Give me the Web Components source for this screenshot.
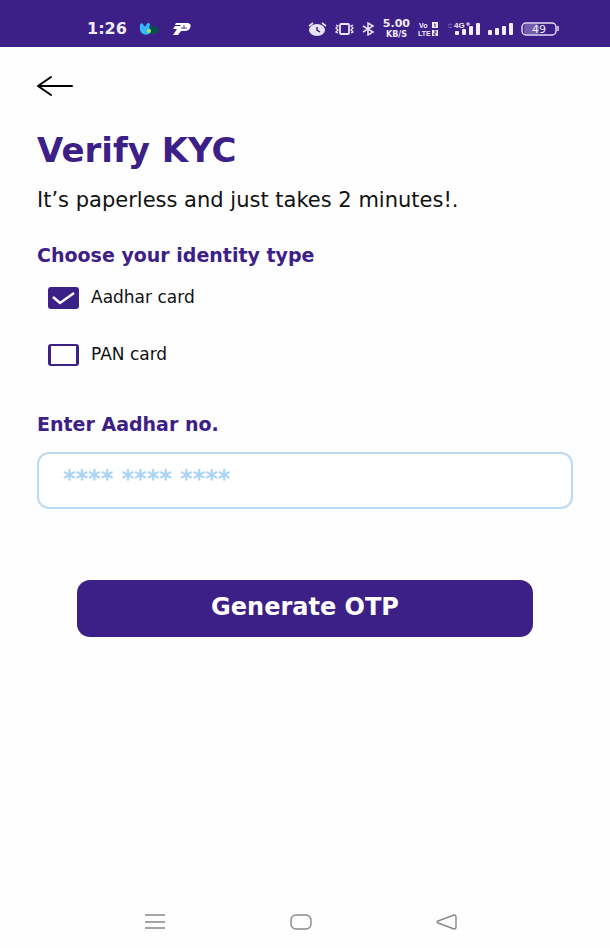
<!DOCTYPE html>
<html lang="en">
<head>
<meta charset="utf-8">
<meta name="viewport" content="width=device-width, initial-scale=1">
<title>Verify KYC</title>
<style>
  html, body { margin: 0; min-height: 100%; }
  body {
    --brand: #3d2087;
    --field: #b9daf2;
    font-family: "DejaVu Sans", "Open Sans", sans-serif;
    color: #111;
    background: #fefefe;
  }
</style>
</head>
<body>
<kyc-screen></kyc-screen>
<script>
const define = (name, html, setup) => {
  const template = document.createElement('template');
  template.innerHTML = html;
  customElements.define(name, class extends HTMLElement {
    constructor() {
      super();
      const root = this.attachShadow({ mode: 'open' });
      root.append(template.content.cloneNode(true));
    }
    connectedCallback() { if (setup) setup(this, this.shadowRoot); }
  });
};

define('status-bar', `
  <style>
    :host { display: flex; align-items: center; justify-content: space-between; box-sizing: border-box;
      height: 47px; padding: 10px 51px 0 87px; background: var(--brand); color: #f1ecfb; }
    .group { display: flex; align-items: center; }
    .left { gap: 12px; }
    .time { font-size: 16px; font-weight: bold; line-height: 20px; }
    .right { gap: 8px; }
    .speed { display: grid; justify-items: center; font-weight: bold; font-size: 11px; line-height: 12px; }
    .speed small { font-size: 8px; line-height: 9px; }
    svg { display: block; flex: none; }
    svg text { font-family: "Liberation Sans", sans-serif; font-weight: bold; }
    svg .level { font-family: "DejaVu Sans", sans-serif; font-weight: normal; }
  </style>
  <div class="group left">
    <span class="time">1:26</span>
    <svg width="21" height="14" viewBox="0 0 21 14">
      <path d="M10 6Q11 2 13 3Q14 6 17 4Q20 7 20 9Q18 12 14 12H9Z" fill="#07504f"/>
      <path d="M1 3Q2 0 4 2Q5 5 7 4Q7 1 10 1Q12 2 10 5Q12 8 11 11Q8 14 4 12Q0 10 1 3Z" fill="#35b9fa"/>
      <ellipse cx="10" cy="9" rx="2" ry="2" fill="#a4e66b"/>
    </svg>
    <svg width="20" height="14" viewBox="0 0 20 14">
      <path d="M4 1H16Q20 2 18 6Q17 9 12 9H9L6 13H1L5 7H1L3 4H9L8 3H3Z" fill="#fff"/>
      <path d="M9 6H15M12 3V7" stroke="#5a4399" fill="none"/>
    </svg>
  </div>
  <div class="group right">
    <svg width="19" height="14" viewBox="0 0 19 14">
      <ellipse cx="9" cy="8" rx="8" ry="6" fill="#e9e3f8"/>
      <path d="M1 4L5 1M14 1L18 4" stroke="#e9e3f8" stroke-width="1.600"/>
      <path d="M9 5V8L12 10" stroke="#3d2087" stroke-width="1.500" fill="none"/>
    </svg>
    <svg width="19" height="14" viewBox="0 0 19 14" fill="none" stroke="#e9e3f8">
      <rect x="5" y="2" width="9" height="10" rx="1" stroke-width="1.800"/>
      <path d="M1 3L3 4L1 6L3 8L1 10L3 11M18 3L16 4L18 6L16 8L18 10L16 11" stroke-width="1.300"/>
    </svg>
    <svg width="13" height="14" viewBox="0 0 13 14" fill="none" stroke="#e9e3f8" stroke-width="1.500">
      <path d="M1 4L11 10L6 13V1L11 4L1 10"/>
    </svg>
    <div class="speed"><span>5.00</span><small>KB/S</small></div>
    <svg width="21" height="16" viewBox="0 0 21 16" fill="#f1ecfb">
      <text x="1" y="7" font-size="7">Vo</text><text x="0" y="15" font-size="7">LTE</text>
      <rect x="14" y="1" width="6" height="6"/><rect x="14" y="9" width="6" height="6"/>
      <path d="M16 3H17V6M16 10H18V12H16V14H18" stroke="#3d2087" fill="none"/>
    </svg>
    <svg width="33" height="14" viewBox="0 0 33 14" fill="#f1ecfb">
      <path d="M1 3Q3 1 5 3M1 5Q3 6 5 5" stroke="#7560ae" fill="none"/>
      <text x="7" y="6" font-size="8">4G</text><path d="M19 2H23M21 0V4" stroke="#f1ecfb"/>
      <rect x="8" y="9" width="4" height="4" rx="1"/><rect x="15" y="7" width="4" height="6" rx="1"/>
      <rect x="22" y="4" width="4" height="9" rx="1"/><rect x="29" y="1" width="4" height="12" rx="1"/>
    </svg>
    <svg width="25" height="14" viewBox="0 0 25 14" fill="#f1ecfb">
      <rect x="0" y="8" width="4" height="5" rx="1"/><rect x="7" y="6" width="4" height="7" rx="1"/>
      <rect x="14" y="4" width="4" height="9" rx="1"/><rect x="21" y="1" width="4" height="12" rx="1"/>
    </svg>
    <svg width="38" height="14" viewBox="0 0 38 14">
      <rect x="3" y="2" width="15" height="10" rx="2" fill="#755cad"/>
      <rect x="1" y="1" width="34" height="12" rx="4" fill="none" stroke="#e2daf4" stroke-width="1.500"/>
      <path d="M37 4V9" stroke="#e2daf4" stroke-width="1.500"/>
      <text class="level" x="11" y="11" font-size="11" fill="#f1ecfb">49</text>
    </svg>
  </div>`);

define('back-button', `
  <style>
    :host { display: block; }
    button { display: block; padding: 0; border: 0; background: none; color: #000; }
    svg { display: block; }
  </style>
  <button aria-label="Back"><svg width="37" height="22" viewBox="0 0 37 22" fill="none" stroke="currentColor" stroke-width="2" stroke-linecap="round" stroke-linejoin="round">
    <path d="M14 2L1 11L14 20M1 11H35"/></svg></button>`);

define('check-option', `
  <style>
    :host { display: block; }
    label { display: flex; align-items: center; gap: 12px; font-size: 17px; line-height: 20px; }
    .box { display: grid; }
    .box > * { grid-area: 1 / 1; }
    input { appearance: none; margin: 0; box-sizing: border-box; width: 31px; height: 22px;
      border: solid var(--brand); border-width: 2px 3px; border-radius: 3px; background: #fff; }
    input:checked { background: var(--brand); }
    svg { display: none; pointer-events: none; }
    input:checked + svg { display: block; }
    .text { padding-bottom: 2px; }
  </style>
  <label><span class="box"><input type="checkbox"><svg width="31" height="22" viewBox="0 0 31 22" fill="none" stroke="#fff" stroke-width="2.500"><path d="M5 10L12 16L26 6"/></svg></span>
  <span class="text"><slot></slot></span></label>`,
  (host, root) => { root.querySelector('input').checked = host.hasAttribute('checked'); });

define('number-field', `
  <style>
    :host { display: block; }
    label { display: block; color: var(--brand); font-size: 19px; font-weight: bold; line-height: 24px; }
    input { display: block; box-sizing: border-box; width: 100%; height: 57px; margin-top: 16px; padding: 0 24px 4px;
      border: 2px solid var(--field); border-radius: 12px; background: #fff; font: bold 24px "DejaVu Sans", sans-serif; color: var(--brand); outline: 0; }
    input::placeholder { color: #a9d3f8; opacity: 1; }
  </style>
  <label for="number"><slot></slot></label>
  <input id="number" inputmode="numeric" placeholder="**** **** ****">`);

define('primary-button', `
  <style>
    :host { display: block; }
    button { display: block; box-sizing: border-box; width: 100%; height: 57px; padding: 0 0 4px; border: 0; border-radius: 13px;
      background: var(--brand); color: #fff; font: bold 24px "DejaVu Sans", sans-serif; }
  </style>
  <button><slot></slot></button>`);

define('system-nav', `
  <style>
    :host { display: grid; grid-template-columns: repeat(3, 1fr); padding: 0 90px 14px 82px; }
    button { display: grid; place-items: center; padding: 0; border: 0; background: none; color: #888; }
  </style>
  <button aria-label="Recent apps"><svg width="22" height="24" viewBox="0 0 22 24" stroke="currentColor" stroke-width="1.400"><path d="M1 5H21M1 12H21M1 18H21"/></svg></button>
  <button aria-label="Home"><svg width="22" height="24" viewBox="0 0 22 24" fill="none" stroke="currentColor" stroke-width="1.400"><rect x="1" y="5" width="20" height="14" rx="5"/></svg></button>
  <button aria-label="Back"><svg width="22" height="24" viewBox="0 0 22 24" fill="none" stroke="currentColor" stroke-width="1.400"><path d="M2 11L18 5Q20 5 20 7V17Q20 19 18 19L2 13Q0 12 2 11Z"/></svg></button>`);

define('kyc-screen', `
  <style>
    :host { display: flex; flex-direction: column; min-height: 100vh; }
    main { flex: 1; padding: 28px 37px 0; }
    h1, h2, p { margin: 0; }
    h1 { margin-top: 33px; font-size: 34px; line-height: 40px; color: var(--brand); }
    p { margin-top: 18px; font-size: 21px; line-height: 24px; }
    h2 { margin-top: 31px; font-size: 19px; line-height: 24px; color: var(--brand); }
    .options { display: grid; gap: 35px; margin: 20px 0 0 11px; }
    number-field { margin-top: 46px; }
    primary-button { margin: 71px 40px 0; }
  </style>
  <status-bar></status-bar>
  <main>
    <back-button></back-button>
    <h1>Verify KYC</h1>
    <p>It’s paperless and just takes 2 minutes!.</p>
    <h2>Choose your identity type</h2>
    <div class="options">
      <check-option checked>Aadhar card</check-option>
      <check-option>PAN card</check-option>
    </div>
    <number-field>Enter Aadhar no.</number-field>
    <primary-button>Generate OTP</primary-button>
  </main>
  <system-nav></system-nav>`);
</script>
</body>
</html>
